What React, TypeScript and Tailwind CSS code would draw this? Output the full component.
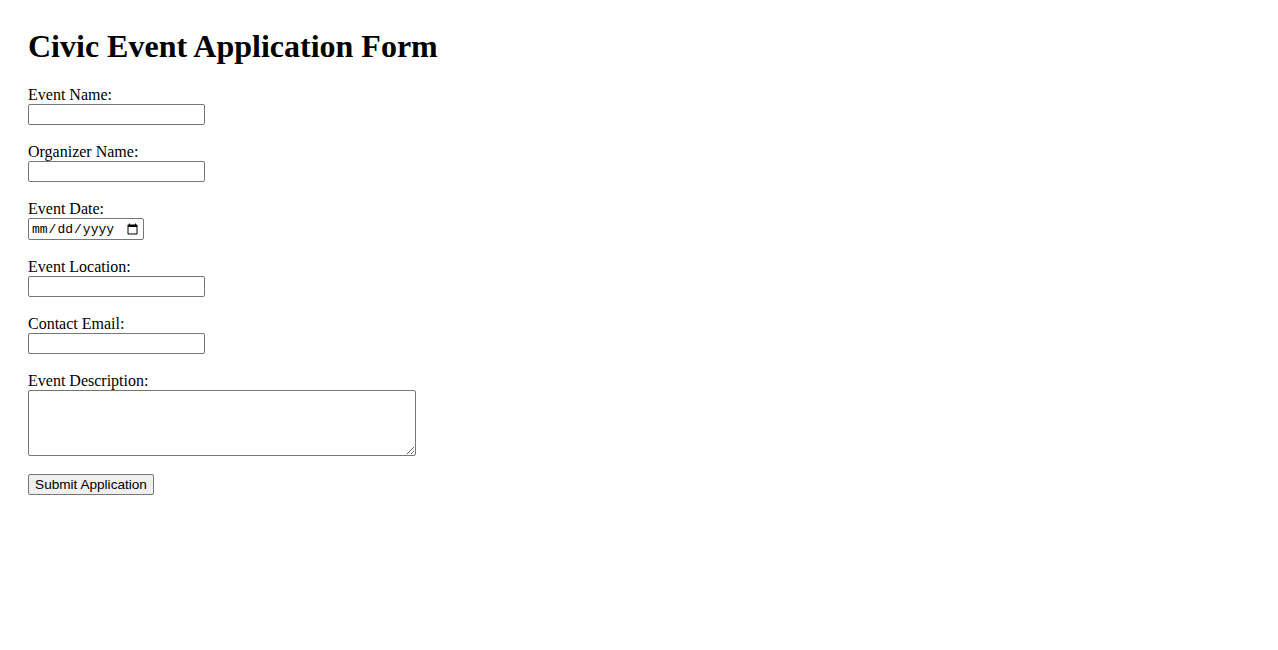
import React from "react";

const fields = [
  { id: "eventName", label: "Event Name:", type: "text" },
  { id: "organizerName", label: "Organizer Name:", type: "text" },
  { id: "eventDate", label: "Event Date:", type: "date" },
  { id: "eventLocation", label: "Event Location:", type: "text" },
  { id: "contactEmail", label: "Contact Email:", type: "email" },
];

const inputBase =
  "block border border-[#767676] rounded-[2px] bg-white text-black outline-none";

export default function App() {
  return (
    <div className="min-h-screen bg-white text-black px-[28px] pt-[28px] font-['Liberation_Serif','Times_New_Roman',serif]">
      <h1 className="text-[32px] font-bold leading-[37px] mb-[22px]">
        Civic Event Application Form
      </h1>

      <form onSubmit={(e) => e.preventDefault()}>
        {fields.map((f) => (
          <div key={f.id} className="mb-[19px]">
            <label htmlFor={f.id} className="block text-[16px] leading-[15px] h-[17px]">
              {f.label}
            </label>
            {f.type === "date" ? (
              <input
                id={f.id}
                type="date"
                className={`${inputBase} w-[116px] h-[22px] px-[2px] pt-[1px] text-[13px] font-['Liberation_Mono',monospace]`}
              />
            ) : (
              <input
                id={f.id}
                type={f.type}
                className={`${inputBase} w-[177px] h-[21px] px-[2px] text-[13.33px] font-['Liberation_Sans',Arial,sans-serif]`}
              />
            )}
          </div>
        ))}

        <div className="mb-[18px]">
          <label htmlFor="eventDescription" className="block text-[16px] leading-[15px] h-[17px]">
            Event Description:
          </label>
          <textarea
            id="eventDescription"
            className={`${inputBase} w-[388px] h-[66px] px-[2px] py-[2px] text-[13.33px] font-['Liberation_Mono',monospace]`}
          />
        </div>

        <button
          type="submit"
          className="block h-[21px] w-[126px] px-[6px] border border-[#767676] rounded-[2px] bg-[#efefef] text-black text-[13.6px] leading-[19px] font-['Liberation_Sans',Arial,sans-serif]"
        >
          Submit Application
        </button>
      </form>
    </div>
  );
}
